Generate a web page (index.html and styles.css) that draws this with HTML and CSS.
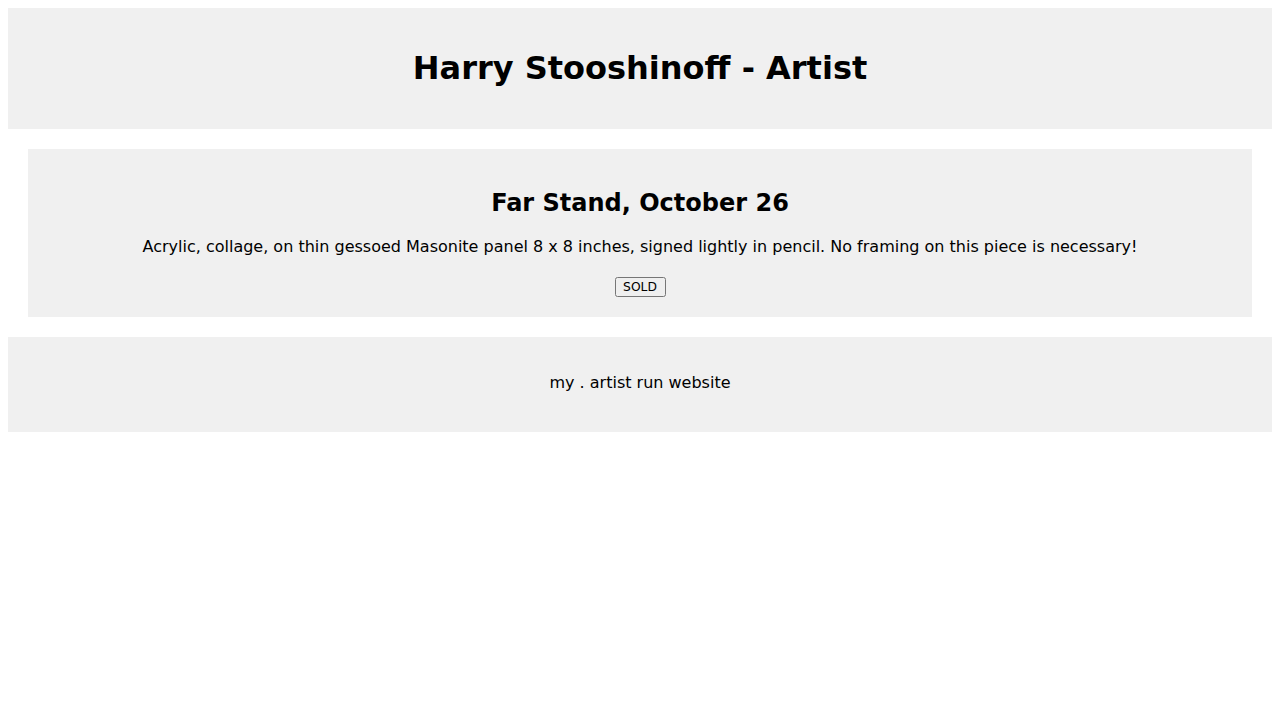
FILE: index.html
```html
<!DOCTYPE html>
<html lang="en">
<head>
<meta charset="utf-8">
<title>Harry Stooshinoff - Artist</title>
<link rel="stylesheet" href="styles.css">
</head>
<body>
<header class="site-header">
  <h1 class="site-title">Harry Stooshinoff - Artist</h1>
</header>
<main class="artwork">
  <h2 class="artwork-title">Far Stand, October 26</h2>
  <p class="artwork-desc">Acrylic, collage, on thin gessoed Masonite panel 8 x 8 inches, signed lightly in pencil. No framing on this piece is necessary!</p>
  <div class="artwork-actions"><button class="sold-btn" type="button">SOLD</button></div>
</main>
<footer class="site-footer">
  <p class="footer-text">my . artist run website</p>
</footer>
</body>
</html>
```
FILE: styles.css
```css
body {
  margin: 8px;
  font-family: "DejaVu Sans", sans-serif;
  color: #000;
  background: #fff;
}
.site-header {
  background: #f0f0f0;
  text-align: center;
  padding: 20px;
}
.site-title {
  font-size: 32px;
  margin: 21.44px 0;
}
.artwork {
  display: block;
  background: #f0f0f0;
  text-align: center;
  margin: 20px;
  padding: 20px;
}
.artwork-title {
  font-size: 24px;
  margin: 19.92px 0;
}
.artwork-desc {
  font-size: 16px;
  margin: 0;
}
.artwork-actions {
  margin-top: 21px;
  display: flex;
  justify-content: center;
}
.sold-btn {
  font-family: "DejaVu Sans", sans-serif;
  font-size: 12.3px;
  width: 51px;
  height: 20px;
  padding: 0 4px;
  box-sizing: border-box;
}
.site-footer {
  background: #f0f0f0;
  text-align: center;
  padding: 20px 20px 24px;
}
.footer-text {
  font-size: 16px;
  margin: 16px 0;
}
```
